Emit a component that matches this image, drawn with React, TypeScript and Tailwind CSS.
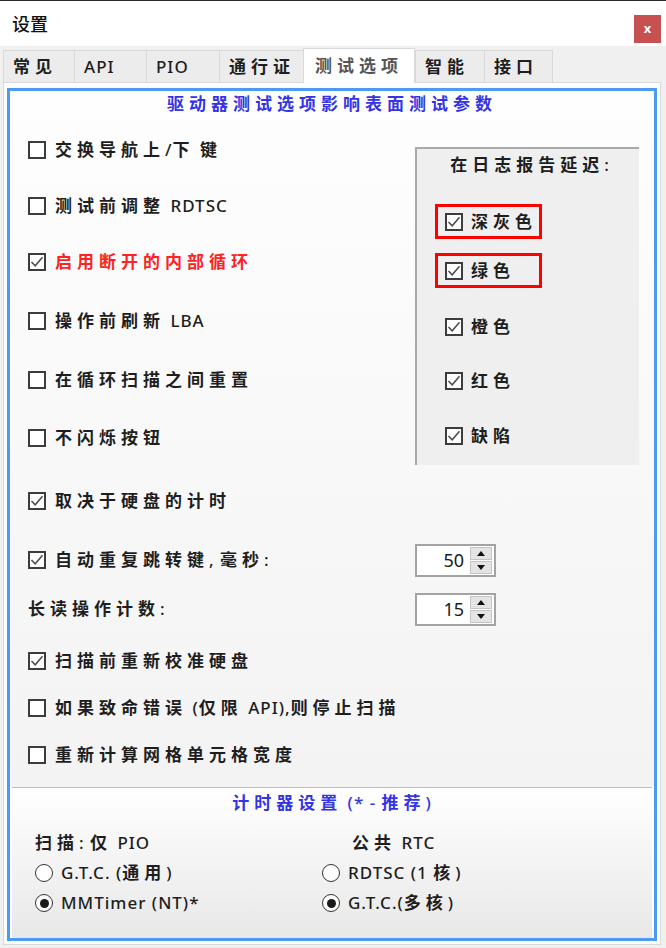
import React from "react"

const font = { fontFamily: '"Noto Sans", "Noto Sans CJK SC", sans-serif' }

// CJK runs get the wide spacing of the original dialog, latin runs stay tight
function Txt({ text }: { text: string }) {
  const parts = text.split(/([\u3400-\u9fff]+)/)
  return (
    <span className="whitespace-pre">
      {parts.map((p, i) =>
        /[\u3400-\u9fff]/.test(p) ? (
          <span key={i} className="tracking-[5px] font-bold">{p}</span>
        ) : (
          <span key={i} className="tracking-[1px] font-medium">{p}</span>
        )
      )}
    </span>
  )
}

function Box({ checked }: { checked?: boolean }) {
  return (
    <span className="w-[18px] h-[18px] border-2 border-[#3c3c3c] bg-white flex items-center justify-center shrink-0">
      {checked && (
        <svg viewBox="0 0 14 14" className="w-[14px] h-[14px]">
          <path d="M1.5 7 L5.2 10.8 L12.5 2.2" stroke="#4a4a4a" strokeWidth="1.5" fill="none" />
        </svg>
      )}
    </span>
  )
}

function Radio({ on }: { on?: boolean }) {
  return (
    <span className="w-[18px] h-[18px] rounded-full border-[1.5px] border-[#333] bg-white flex items-center justify-center shrink-0">
      {on && <span className="w-[9px] h-[9px] rounded-full bg-[#1a1a1a]" />}
    </span>
  )
}

function Spinner({ value }: { value: string }) {
  return (
    <div className="w-[81px] h-[33px] border-2 border-[#a3a3a3] bg-white flex items-center">
      <span className="flex-1 text-right pr-[6px] text-[18px] text-[#1a1a1a]">{value}</span>
      <div className="w-[22px] h-[27px] mr-[2px] flex flex-col gap-[1px]">
        <div className="flex-1 bg-[#e4e4e4] border border-[#c4c4c4] flex items-center justify-center">
          <svg viewBox="0 0 8 5" className="w-[8px] h-[5px]"><path d="M0 5 L4 0 L8 5Z" fill="#111" /></svg>
        </div>
        <div className="flex-1 bg-[#e4e4e4] border border-[#c4c4c4] flex items-center justify-center">
          <svg viewBox="0 0 8 5" className="w-[8px] h-[5px]"><path d="M0 0 L4 5 L8 0Z" fill="#111" /></svg>
        </div>
      </div>
    </div>
  )
}

const topRows = [
  { t: "交换导航上/下 键", c: false, h: "h-[56px]" },
  { t: "测试前调整 RDTSC", c: false, h: "h-[55px]" },
  { t: "启用断开的内部循环", c: true, red: true, h: "h-[58px]" },
  { t: "操作前刷新 LBA", c: false, h: "h-[60px]" },
  { t: "在循环扫描之间重置", c: false, h: "h-[58px]" },
  { t: "不闪烁按钮", c: false, h: "h-[57px]" },
]

const logItems = [
  { t: "深灰色", mark: true, mt: "mt-[24px]" },
  { t: "绿色", mark: true, mt: "mt-[14px]" },
  { t: "橙色", mark: false, mt: "mt-[21px]" },
  { t: "红色", mark: false, mt: "mt-[19px]" },
  { t: "缺陷", mark: false, mt: "mt-[20px]" },
]

const tabs = [
  { t: "常见", w: "w-[71px]" },
  { t: "API", w: "w-[72px]" },
  { t: "PIO", w: "w-[73px]" },
  { t: "通行证", w: "w-[84px]" },
  { t: "测试选项", w: "w-[112px]", active: true },
  { t: "智能", w: "w-[69px]" },
  { t: "接口", w: "w-[69px]" },
]

export default function App() {
  return (
    <div style={font} className="w-[666px] h-[948px] bg-[#f0f0f0] border-t border-[#2b2b2b] flex flex-col text-[17px] text-[#1e1e1e] overflow-hidden">
      {/* Title bar */}
      <div className="h-[45px] bg-white flex justify-between shrink-0">
        <span className="pl-[12px] pt-[9px] text-[18px] font-medium text-[#111]" style={{ fontFamily: '"Noto Sans CJK SC", sans-serif' }}>设置</span>
        <div className="mt-[14px] mr-[5px] w-[27px] h-[28px] bg-[#c75050] flex items-center justify-center text-white text-[13px] font-bold">x</div>
      </div>

      {/* Tabs */}
      <div className="h-[36px] flex items-end pl-[3px] shrink-0">
        {tabs.map((tab) =>
          tab.active ? (
            <div key={tab.t} className={`${tab.w} h-[35px] bg-white border border-b-0 border-[#d9d9d9] -mb-[1px] relative flex items-center pl-[11px] text-[#555]`}>
              <Txt text={tab.t} />
            </div>
          ) : (
            <div key={tab.t} className={`${tab.w} h-[32px] bg-[#ececec] border border-r-0 border-b-0 border-[#d9d9d9] flex items-center pl-[9px] last:border-r`}>
              <Txt text={tab.t} />
            </div>
          )
        )}
      </div>

      {/* Panel */}
      <div className="flex-1 ml-[3px] mr-[5px] mb-[3px] border border-[#d9d9d9] bg-white px-[3px] pt-[5px] pb-[3px] flex">
        <div className="flex-1 border-[3px] border-[#4b9bf5] flex flex-col">
          {/* Upper options */}
          <div className="h-[696px] shrink-0 bg-gradient-to-b from-[#fefefe] to-[#f3f3f3] flex flex-col">
            <div className="h-[26px] flex items-center justify-center text-[#3434e4]">
              <Txt text="驱动器测试选项影响表面测试参数" />
            </div>

            <div className="flex">
              <div className="w-[405px] pl-[18px] pt-[5px] flex flex-col">
                {topRows.map((r) => (
                  <div key={r.t} className={`${r.h} flex items-center gap-[9px]`}>
                    <Box checked={r.c} />
                    <span className={r.red ? "text-[#ff2222]" : ""}><Txt text={r.t} /></span>
                  </div>
                ))}
              </div>

              <div className="pt-[30px]">
                <div className="w-[224px] h-[318px] bg-[#efefef] border-l-2 border-t-2 border-[#a9a9a9] flex flex-col pl-[18px]">
                  <div className="h-[31px] flex items-center justify-center pr-[14px]">
                    <Txt text="在日志报告延迟:" />
                  </div>
                  {logItems.map((it) => (
                    <div key={it.t} className={`${it.mt} w-[107px] h-[35px] border-[3px] ${it.mark ? "border-[#ff0000]" : "border-transparent"} flex items-center gap-[8px] pl-[7px] whitespace-nowrap`}>
                      <Box checked />
                      <Txt text={it.t} />
                    </div>
                  ))}
                </div>
              </div>
            </div>

            <div className="pl-[18px] flex flex-col">
              <div className="h-[70px] flex items-center gap-[9px]">
                <Box checked />
                <Txt text="取决于硬盘的计时" />
              </div>
              <div className="h-[48px] flex items-center">
                <div className="w-[387px] flex items-center gap-[9px]">
                  <Box checked />
                  <Txt text="自动重复跳转键, 毫秒:" />
                </div>
                <Spinner value="50" />
              </div>
              <div className="h-[50px] flex items-center">
                <div className="w-[387px]">
                  <Txt text="长读操作计数:" />
                </div>
                <Spinner value="15" />
              </div>
              <div className="h-[54px] flex items-center gap-[9px]">
                <Box checked />
                <Txt text="扫描前重新校准硬盘" />
              </div>
              <div className="h-[40px] flex items-center gap-[9px]">
                <Box />
                <Txt text="如果致命错误 (仅限 API),则停止扫描" />
              </div>
              <div className="h-[54px] flex items-center gap-[9px]">
                <Box />
                <Txt text="重新计算网格单元格宽度" />
              </div>
            </div>
          </div>

          {/* Timer settings */}
          <div className="flex-1 mx-[2px] border-t border-[#bdbdbd] bg-gradient-to-b from-white to-[#e8e8e8] flex flex-col">
            <div className="h-[30px] flex items-center justify-center text-[#3434e4]">
              <Txt text="计时器设置 (* - 推荐)" />
            </div>
            <div className="mt-[10px] flex pl-[23px]">
              <div className="w-[287px] flex flex-col">
                <div className="h-[30px] flex items-center"><Txt text="扫描: 仅 PIO" /></div>
                <div className="h-[30px] flex items-center gap-[8px]"><Radio /><Txt text="G.T.C. (通用)" /></div>
                <div className="h-[30px] flex items-center gap-[8px]"><Radio on /><Txt text="MMTimer (NT)*" /></div>
              </div>
              <div className="flex flex-col">
                <div className="h-[30px] flex items-center pl-[30px]"><Txt text="公共 RTC" /></div>
                <div className="h-[30px] flex items-center gap-[8px]"><Radio /><Txt text="RDTSC (1 核)" /></div>
                <div className="h-[30px] flex items-center gap-[8px]"><Radio on /><Txt text="G.T.C.(多核)" /></div>
              </div>
            </div>
          </div>
        </div>
      </div>
    </div>
  )
}
